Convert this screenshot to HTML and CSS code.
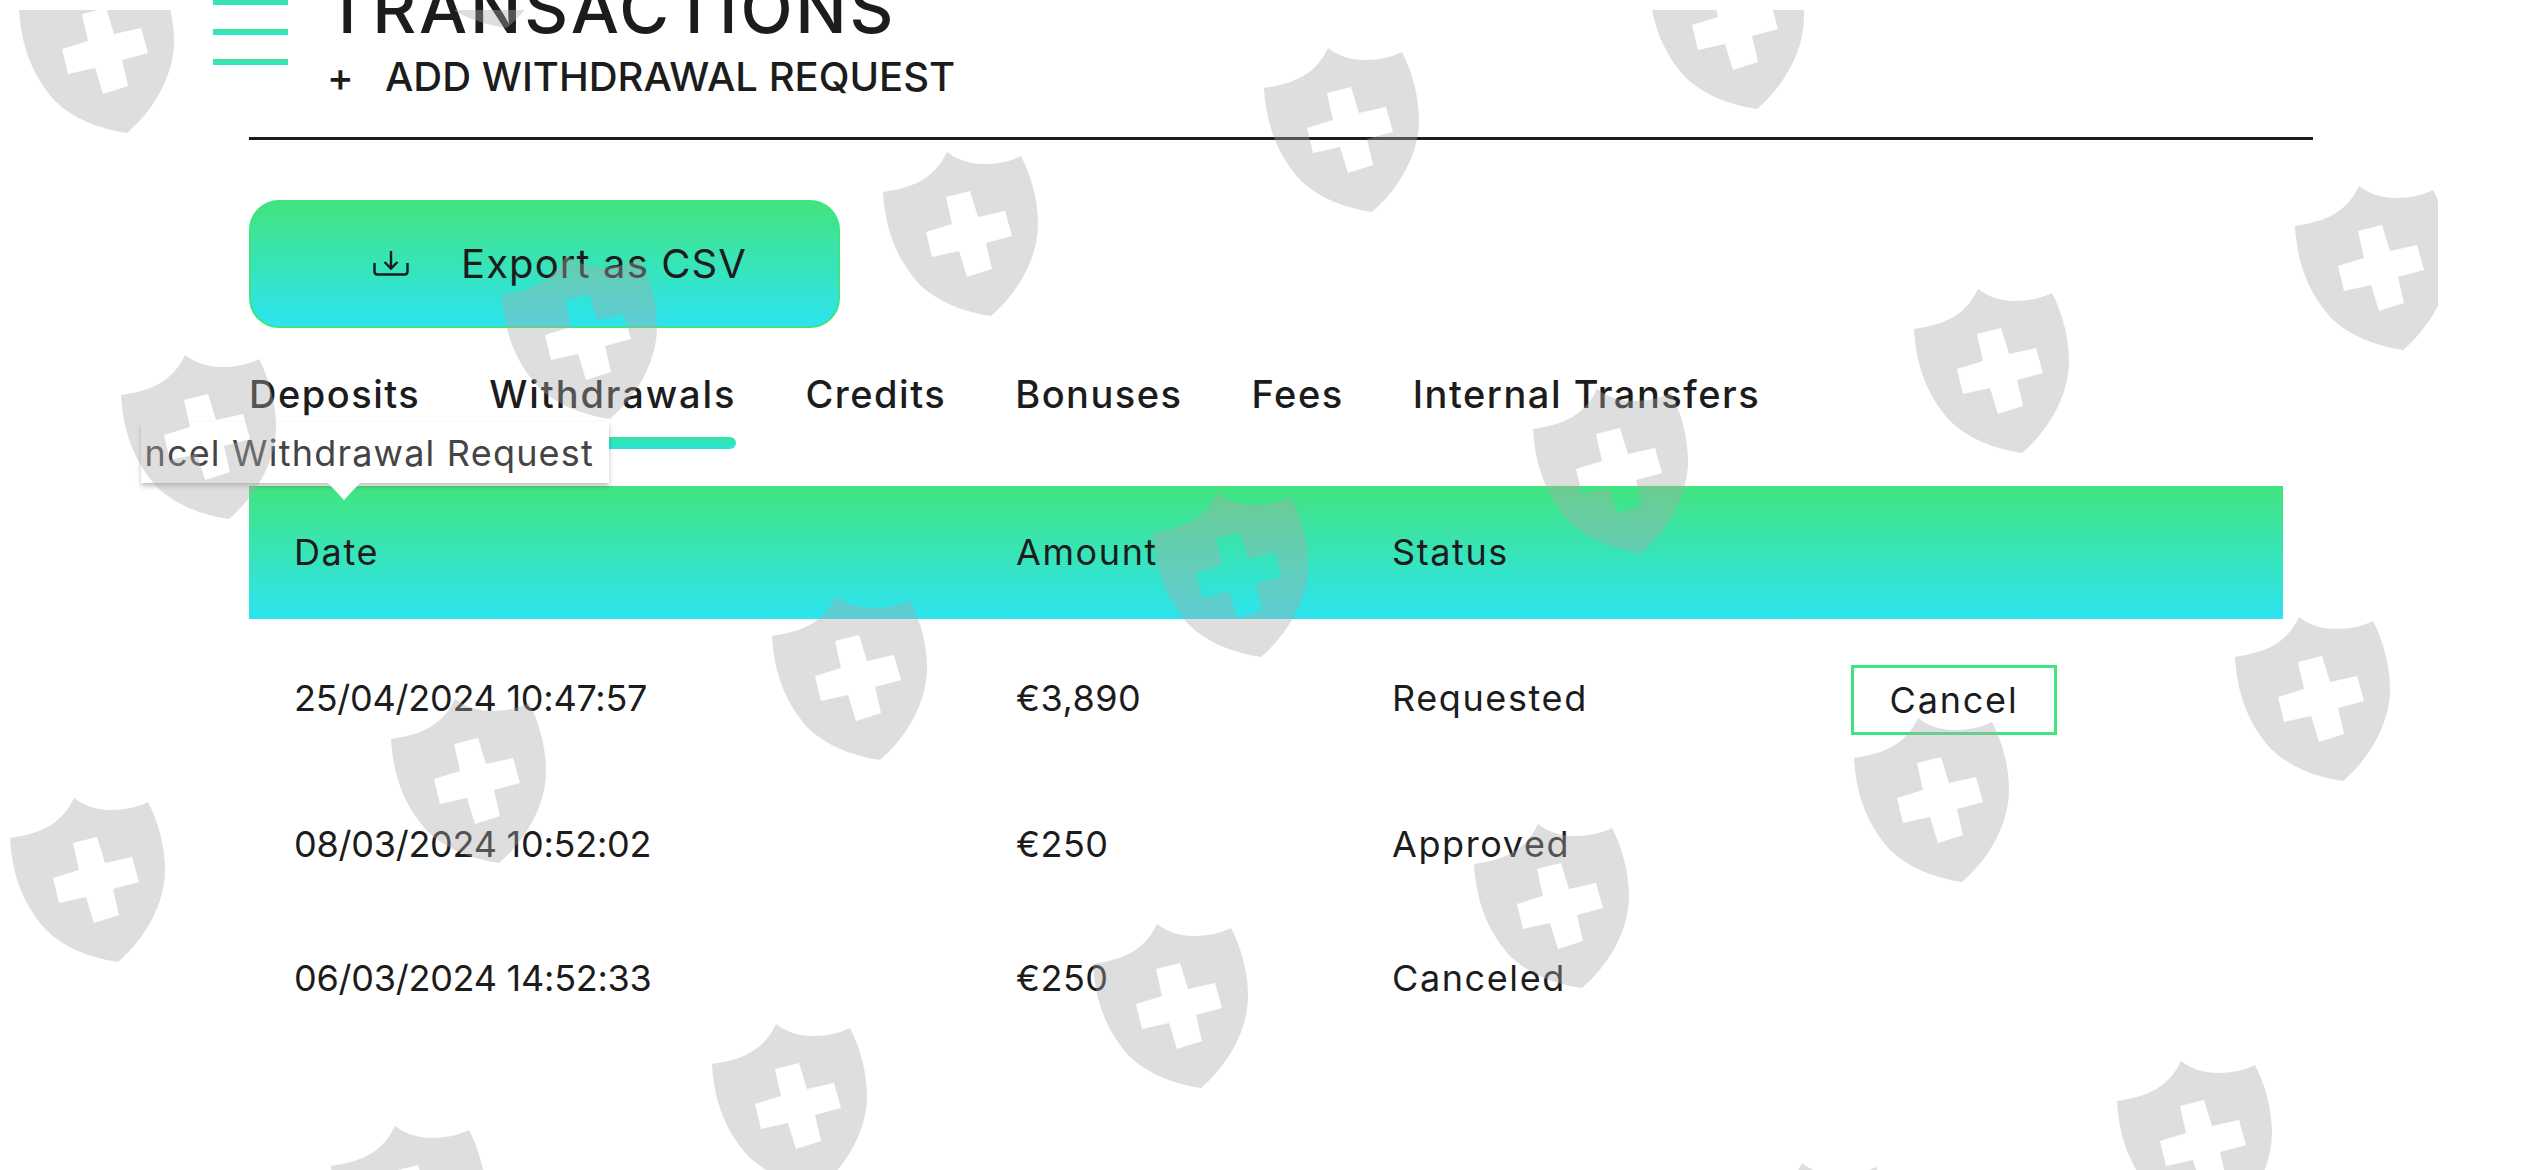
FILE: index.html
```html
<!DOCTYPE html>
<html lang="en">
<head>
    <meta charset="UTF-8">
    <title>Transactions</title>
    <link rel="stylesheet" href="styles.css">
</head>
<body>

<div class="page">
    <header class="page-head">
        <div class="head-row">
            <div class="burger"><span></span><span></span><span></span></div>
            <div class="head-text">
                <h1>TRANSACTIONS</h1>
                <a class="add-link"><span class="plus">+</span> ADD WITHDRAWAL REQUEST</a>
            </div>
        </div>
    </header>

    <button class="export-btn">
        <svg class="export-icon" viewBox="0 0 36 26" fill="none" stroke="#1c1c1c" stroke-width="2.4">
            <path d="M1.5 13v8.5q0 3 3 3h27q3 0 3-3V13"/>
            <path d="M18 1v17M11.5 12l6.5 6.5 6.5-6.5"/>
        </svg>
        Export as CSV
    </button>

    <div class="tabs">
        <span class="tab">Deposits</span>
        <span class="tab active">Withdrawals</span>
        <span class="tab">Credits</span>
        <span class="tab">Bonuses</span>
        <span class="tab">Fees</span>
        <span class="tab">Internal Transfers</span>
        <div class="tooltip"><span>Cancel Withdrawal Request</span></div>
    </div>

    <div class="table">
        <div class="row head">
            <div>Date</div><div>Amount</div><div>Status</div><div></div>
        </div>
        <div class="row">
            <div class="date">25/04/2024 10:47:57</div><div class="amount">€3,890</div><div>Requested</div>
            <div><button class="cancel-btn">Cancel</button></div>
        </div>
        <div class="row">
            <div class="date">08/03/2024 10:52:02</div><div class="amount">€250</div><div>Approved</div><div></div>
        </div>
        <div class="row">
            <div class="date">06/03/2024 14:52:33</div><div class="amount">€250</div><div>Canceled</div><div></div>
        </div>
    </div>
</div>

<!-- watermark lies over everything -->
<svg class="watermark" viewBox="0 10 2438 1160" width="2438" height="1160">
    <defs>
        <path id="shield" fill-rule="evenodd" d="M64 0C74 8 87 12 101 12C115 12 128 9 138 4C149 25 155 50 155 72C155 105 136 140 108 164C80 160 55 150 36 132C12 105 2 75 0 40C25 36 50 30 64 0ZM63 45L87 39L95 65L122 59L129 84L103 91L109 117L84 125L76 99L49 105L43 80L69 72Z"/>
    </defs>
    <use href="#shield" x="19" y="-31"/>
    <use href="#shield" x="399" y="-136"/>
    <use href="#shield" x="1264" y="48"/>
    <use href="#shield" x="1649" y="-55"/>
    <use href="#shield" x="883" y="152"/>
    <use href="#shield" x="2295" y="186"/>
    <use href="#shield" x="502" y="255"/>
    <use href="#shield" x="1914" y="289"/>
    <use href="#shield" x="121" y="355"/>
    <use href="#shield" x="1533" y="389"/>
    <use href="#shield" x="1153" y="493"/>
    <use href="#shield" x="772" y="596"/>
    <use href="#shield" x="2235" y="617"/>
    <use href="#shield" x="391" y="699"/>
    <use href="#shield" x="1854" y="718"/>
    <use href="#shield" x="10" y="798"/>
    <use href="#shield" x="1474" y="824"/>
    <use href="#shield" x="1093" y="924"/>
    <use href="#shield" x="712" y="1024"/>
    <use href="#shield" x="2117" y="1061"/>
    <use href="#shield" x="331" y="1126"/>
    <use href="#shield" x="1738" y="1163"/>
</svg>

</body>
</html>
```

FILE: styles.css
```css
html, body {
    margin: 0;
    padding: 0;
    height: 100%;
    overflow: hidden;
    background-color: #fff;
}

body {
    font-family: Inter, "Noto Sans", sans-serif;
    color: #1c1c1c;
    position: relative;
}

.page {
    width: 2064px;
    margin-left: 249px;
}

/* Header */
.page-head {
    border-bottom: 3px solid #1c1c1c;
    height: 141px;
    box-sizing: border-box;
}

.head-row {
    display: flex;
    gap: 47px;
    margin-left: -36px;
    margin-top: -1px;
}

.burger {
    display: flex;
    flex-direction: column;
    gap: 24px;
    width: 75px;
}

.burger span {
    display: block;
    height: 6px;
    background: linear-gradient(#42e48f, #2de4d8);
}

.head-text {
    margin-top: -33px;
}

h1 {
    margin: 0 0 0 -10px;
    font-size: 68px;
    font-weight: 500;
    line-height: 84px;
    letter-spacing: 2.8px;
}

.add-link {
    display: flex;
    font-size: 40px;
    font-weight: 500;
    line-height: 48px;
    margin-left: -8px;
    margin-top: 3px;
}

.plus {
    width: 58px;
}

/* Export */
.export-btn {
    display: flex;
    align-items: center;
    gap: 52px;
    width: 591px;
    height: 128px;
    margin-top: 60px;
    padding: 0 0 2px 122px;
    border: 2px solid #3fe47f;
    border-radius: 30px;
    background: linear-gradient(#42e47f, #2de4f0);
    font-family: inherit;
    font-size: 40px;
    letter-spacing: 1.1px;
    color: #1c1c1c;
}

.export-icon {
    width: 36px;
    height: 26px;
}

/* Tabs */
.tabs {
    position: relative;
    display: flex;
    gap: 69px;
    margin-top: 41px;
    height: 80px;
}

.tab {
    font-size: 38px;
    font-weight: 500;
    line-height: 50px;
    letter-spacing: 1.5px;
}

.tab.active {
    letter-spacing: 1.9px;
}

.tab.active::after {
    content: "";
    display: block;
    height: 12px;
    margin-top: 18px;
    border-radius: 6px;
    background: linear-gradient(#33e4a8, #2de4d8);
}

.tooltip {
    position: absolute;
    left: -108px;
    top: 53px;
    width: 468px;
    height: 61px;
    padding-right: 15px;
    box-sizing: border-box;
    display: flex;
    justify-content: flex-end;
    align-items: center;
    overflow: hidden;
    white-space: nowrap;
    background-color: #fff;
    box-shadow: 0 3px 5px rgba(0, 0, 0, 0.25);
    font-size: 36px;
    letter-spacing: 1.2px;
    color: #444;
}

/* tooltip arrow */
.tabs::after {
    content: "";
    position: absolute;
    left: 79px;
    top: 114px;
    border-left: 16px solid transparent;
    border-right: 16px solid transparent;
    border-top: 17px solid #fff;
}

/* Table */
.table {
    width: 2034px;
    margin-top: 37px;
}

.row {
    display: grid;
    grid-template-columns: 722px 376px 459px auto;
    align-items: center;
    height: 133px;
    padding-left: 45px;
    font-size: 36px;
    letter-spacing: 1.6px;
}

.row .date {
    letter-spacing: -0.25px;
}

.row .amount {
    letter-spacing: 0.5px;
}

.row:nth-child(2) {
    height: 158px;
}

.row:nth-child(3) {
    height: 134px;
}

.row:nth-child(4) {
    height: 134px;
}

.row.head {
    height: 131px;
    padding-bottom: 2px;
    background: linear-gradient(#42e47f, #2de4f0);
}

.cancel-btn {
    display: block;
    width: 206px;
    height: 70px;
    margin-top: 3px;
    border: 3px solid #3fe47f;
    background-color: transparent;
    font-family: inherit;
    font-size: 36px;
    letter-spacing: 1.8px;
    color: #1c1c1c;
}

/* Watermark */
.watermark {
    position: absolute;
    left: 0;
    top: 10px;
    fill: #aaa;
    fill-opacity: 0.39;
    pointer-events: none;
}
```
